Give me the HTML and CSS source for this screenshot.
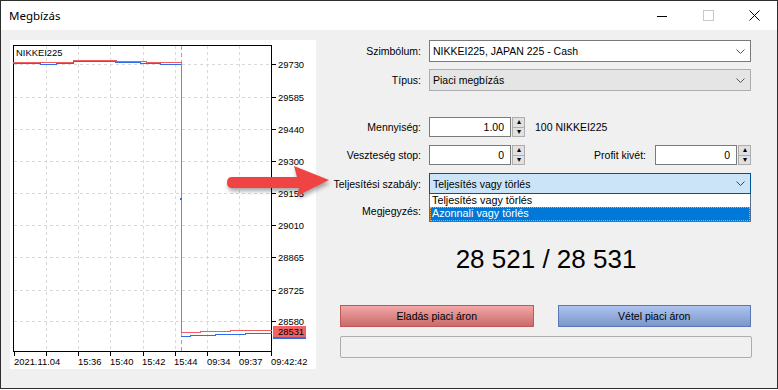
FILE: index.html
```html
<!DOCTYPE html>
<html lang="hu">
<head>
  <meta charset="UTF-8">
  <title>Megbízás</title>
  <link rel="stylesheet" href="styles.css">
</head>
<body>
  <div class="window">
    <!-- Címsor -->
    <div class="titlebar">
      <span class="title">Megbízás</span>
      <div class="controls">
        <span class="ctl"><svg width="10" height="10"><path d="M0 5.5H10" stroke="#000"/></svg></span>
        <span class="ctl"><svg width="11" height="11"><rect x="0.5" y="0.5" width="10" height="10" fill="none" stroke="#c8c8c8"/></svg></span>
        <span class="ctl"><svg width="11" height="11"><path d="M0.5 0.5L10.5 10.5M10.5 0.5L0.5 10.5" stroke="#000"/></svg></span>
      </div>
    </div>

    <div class="content">
      <!-- Grafikon -->
      <div class="chart">
        <svg width="306" height="329" viewBox="10 40 306 329" shape-rendering="crispEdges">
          <g stroke="#d9d9d9" stroke-dasharray="3 3">
            <path d="M14 64.5H272M14 97.5H272M14 129.5H272M14 161.5H272M14 193.5H272M14 225.5H272M14 257.5H272M14 290.5H272M14 321.5H272"/>
            <path d="M46.5 46V352M78.5 46V352M110.5 46V352M143.5 46V352M175.5 46V352M207.5 46V352M239.5 46V352"/>
          </g>
          <path d="M181.5 46V352" stroke="#a3a3a3" stroke-dasharray="4 3"/>
          <rect x="13.5" y="45.5" width="258" height="306" fill="none" stroke="#000"/>
          <g stroke="#000">
            <path d="M272 64.5H276M272 97.5H276M272 129.5H276M272 161.5H276M272 193.5H276M272 225.5H276M272 257.5H276M272 290.5H276M272 321.5H276"/>
            <path d="M14.5 352V356M46.5 352V356M78.5 352V356M110.5 352V356M143.5 352V356M175.5 352V356M207.5 352V356M239.5 352V356M271.5 352V356"/>
          </g>
          <g fill="none">
            <path d="M13 62.5H73V60.5H116V61.5H146V62.5H181" stroke="#f25c5c"/>
            <path d="M13 63.5H40V64.5H56V63.5H73V61.5H115V62.5H140V63.5H160V64.5H181" stroke="#2f6ee8"/>
            <path d="M181.5 62V333" stroke="#f25c5c"/>
            <path d="M181 332.5H200V331.5H230V330.5H272" stroke="#f25c5c"/>
            <path d="M181 336.5H190V335.5H215V334.5H245V333.5H272" stroke="#2f6ee8"/>
          </g>
          <rect x="180" y="198" width="2" height="2" fill="#2f6ee8"/>
          <rect x="273" y="326" width="33" height="11" fill="#f26262"/>
          <rect x="273" y="337" width="33" height="2" fill="#2f6ee8"/>
          <g class="axis" shape-rendering="auto">
            <text x="16" y="56">NIKKEI225</text>
            <text x="278" y="68">29730</text>
            <text x="278" y="101">29585</text>
            <text x="278" y="133">29440</text>
            <text x="278" y="165">29300</text>
            <text x="278" y="197">29155</text>
            <text x="278" y="229">29010</text>
            <text x="278" y="261">28865</text>
            <text x="278" y="294">28725</text>
            <text x="278" y="325">28580</text>
            <text x="278" y="335" fill="#fff">28531</text>
            <text x="14" y="365">2021.11.04</text>
            <text x="78" y="365">15:36</text>
            <text x="110" y="365">15:40</text>
            <text x="142" y="365">15:42</text>
            <text x="174" y="365">15:44</text>
            <text x="207" y="365">09:34</text>
            <text x="239" y="365">09:37</text>
            <text x="271" y="365">09:42:42</text>
          </g>
        </svg>
      </div>

      <!-- Megbízás űrlap -->
      <div class="form">
        <div class="row">
          <span class="lbl">Szimbólum:</span>
          <div class="select">NIKKEI225, JAPAN 225 - Cash
            <svg class="chev" width="9" height="5"><path d="M0.5 0.5L4.5 4.5L8.5 0.5" fill="none" stroke="#555"/></svg></div>
        </div>
        <div class="row r-type">
          <span class="lbl">Típus:</span>
          <div class="select gray">Piaci megbízás
            <svg class="chev" width="9" height="5"><path d="M0.5 0.5L4.5 4.5L8.5 0.5" fill="none" stroke="#555"/></svg></div>
        </div>
        <div class="row r-vol">
          <span class="lbl">Mennyiség:</span>
          <div class="num">1.00</div>
          <div class="spin"><span>&#9652;</span><span>&#9662;</span></div>
          <span class="unit">100 NIKKEI225</span>
        </div>
        <div class="row r-sl">
          <span class="lbl">Veszteség stop:</span>
          <div class="num">0</div>
          <div class="spin"><span>&#9652;</span><span>&#9662;</span></div>
          <span class="lbl-tp">Profit kivét:</span>
          <div class="num">0</div>
          <div class="spin"><span>&#9652;</span><span>&#9662;</span></div>
        </div>
        <div class="row r-fill">
          <span class="lbl">Teljesítési szabály:</span>
          <div class="select active">Teljesítés vagy törlés
            <svg class="chev" width="9" height="5"><path d="M0.5 0.5L4.5 4.5L8.5 0.5" fill="none" stroke="#444"/></svg></div>
          <ul class="dropdown">
            <li>Teljesítés vagy törlés</li>
            <li class="sel">Azonnali vagy törlés</li>
          </ul>
        </div>
        <div class="row r-comment">
          <span class="lbl">Megjegyzés:</span>
          <div class="num comment"></div>
        </div>

        <div class="price">28 521 / 28 531</div>

        <div class="buttons">
          <button class="btn sell">Eladás piaci áron</button>
          <button class="btn buy">Vétel piaci áron</button>
        </div>
        <div class="progress"></div>
      </div>
    </div>

    <!-- Piros nyíl -->
    <svg class="arrow" width="112" height="44" viewBox="0 0 112 44">
      <path d="M8 10H73L70 -1L105 13L73 29L75 21H8Q3 21 3 15.5Q3 10 8 10Z" fill="#f04444" transform="translate(0 6)"/>
    </svg>
  </div>
</body>
</html>
```

FILE: styles.css
```css
body {
  margin: 0;
  background: #fff;
  font-family: "Liberation Sans", Arial, sans-serif;
  font-size: 10.5px;
  color: #000;
}

.window {
  position: relative;
  width: 778px;
  height: 389px;
  box-sizing: border-box;
  border: 1px solid #2e2e2e;
  background: #f0f0f0;
}

/* Title bar */
.titlebar {
  height: 29px;
  background: #fff;
  display: flex;
  align-items: center;
}

.title {
  padding-left: 8px;
  font-family: "Noto Sans", "Open Sans", sans-serif;
  font-size: 11.5px;
  color: #000;
}

.controls {
  margin-left: auto;
  display: flex;
  align-self: stretch;
}

.ctl {
  width: 46px;
  display: flex;
  align-items: center;
  justify-content: center;
}

.ctl svg {
  display: block;
}

.content {
  display: flex;
  padding: 10px 0 0 9px;
}

/* Chart */
.chart {
  flex: none;
  width: 306px;
  height: 329px;
  background: #fff;
}

.chart svg {
  display: block;
}

.axis text {
  font-family: "Liberation Sans", Arial, sans-serif;
  font-size: 9.4px;
  fill: #000;
}

/* Form */
.form {
  width: 435px;
}

.row {
  display: flex;
  align-items: center;
  position: relative;
}

.lbl {
  flex: none;
  width: 105px;
  margin-right: 8px;
  text-align: right;
}

.select {
  width: 322px;
  height: 22px;
  box-sizing: border-box;
  border: 1px solid #7a7a7a;
  background: #fff;
  display: flex;
  align-items: center;
  justify-content: space-between;
  padding: 0 5px 0 3px;
}

.select.gray {
  background: #e5e5e5;
  border-color: #adadad;
}

.select.active {
  height: 21px;
  background: #cce4f7;
  border-color: #005499;
}

.chev {
  display: block;
}

.r-type {
  margin-top: 7px;
}

.r-vol {
  margin-top: 26px;
}

.r-sl,
.r-fill {
  margin-top: 8px;
}

.r-comment {
  margin-top: 7px;
}

.num {
  width: 82px;
  height: 20px;
  box-sizing: border-box;
  border: 1px solid #7a7a7a;
  background: #fff;
  text-align: right;
  padding: 0 6px;
  line-height: 18px;
}

.comment {
  width: 322px;
}

.spin {
  width: 13px;
  height: 20px;
  margin-left: 1px;
  display: flex;
  flex-direction: column;
}

.spin span {
  flex: 1;
  border: 1px solid #adadad;
  background: #e1e1e1;
  font-size: 8px;
  line-height: 8px;
  text-align: center;
  color: #000;
  overflow: hidden;
}

.spin span + span {
  border-top: none;
}

.unit {
  margin-left: 10px;
}

.lbl-tp {
  flex: 1;
  text-align: right;
  margin-right: 9px;
}

/* Open combo list */
.dropdown {
  position: absolute;
  left: 113px;
  top: 21px;
  width: 322px;
  box-sizing: border-box;
  margin: 0;
  padding: 0;
  list-style: none;
  border: 1px solid #5a6e8c;
  border-top: none;
  background: #fff;
  z-index: 2;
  font-size: 10.8px;
}

.dropdown li {
  height: 13px;
  line-height: 13px;
  padding-left: 2px;
}

.dropdown li.sel {
  height: 14px;
  background: #0078d7;
  color: #fff;
  outline: 1px dotted #f0a040;
  outline-offset: -1px;
}

.price {
  margin-top: 23px;
  margin-left: 24px;
  width: 412px;
  text-align: center;
  font-size: 26px;
  line-height: 30px;
}

.buttons {
  display: flex;
  gap: 24px;
  margin-top: 31px;
  margin-left: 24px;
}

.btn {
  width: 194px;
  height: 22px;
  box-sizing: border-box;
  font-family: "Liberation Sans", Arial, sans-serif;
  font-size: 10.5px;
  color: #000;
  padding: 0;
  cursor: pointer;
}

.btn.sell {
  border: 1px solid #c05858;
  background: linear-gradient(#f4a6a6, #c86a6a);
}

.btn.buy {
  border: 1px solid #5b78b6;
  background: linear-gradient(#adc4f0, #7c96c8);
}

.progress {
  margin-top: 9px;
  margin-left: 24px;
  width: 412px;
  height: 22px;
  box-sizing: border-box;
  border: 1px solid #adadad;
  border-radius: 2px;
  background: #f0f0f0;
}

/* Callout arrow over the dialog */
.arrow {
  position: absolute;
  left: 223px;
  top: 160px;
  filter: drop-shadow(1px 3px 2px rgba(0, 0, 0, 0.35));
  z-index: 3;
}
```
